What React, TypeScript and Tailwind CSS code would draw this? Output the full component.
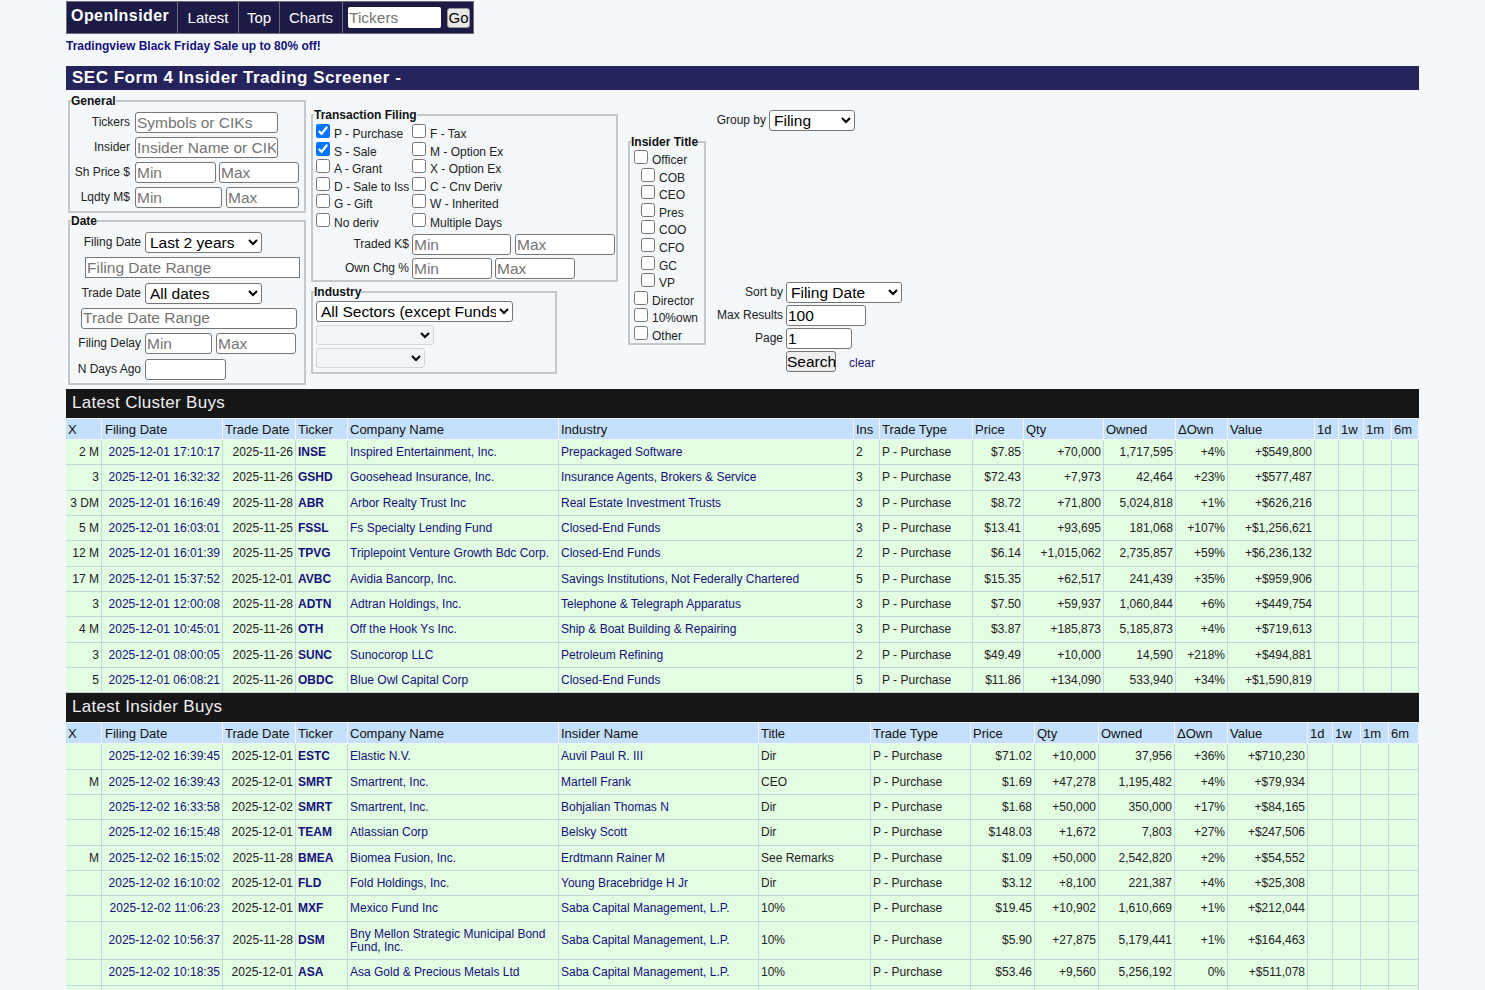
import React from "react";

const field = "h-[21px] border border-[#767676] rounded-[3px] bg-white px-[1px] text-[15.5px] leading-[19px] text-black placeholder:text-[#757575] outline-none";
const sel = "h-[21px] border border-[#767676] rounded-[3px] bg-white text-[15.5px] text-black";
const lab = "text-[12px] leading-[21px] text-right text-[#222] shrink-0";
const leg = "ml-[1px] text-[12px] leading-[14px] font-bold text-[#111]";
const fs = "border-2 border-[#c5c8cb]";
const link = "text-[#14107c]";

function Cb({ label, checked, indent }: { label: string; checked?: boolean; indent?: boolean }) {
  return (
    <div className="flex items-start">
      <input type="checkbox" defaultChecked={checked} className="w-[14px] h-[14px] mt-[2px] m-0 shrink-0" />
      <span className="ml-[4px] mt-[5px] text-[12px] leading-[14px] text-[#222] whitespace-nowrap">{label}</span>
    </div>
  );
}

function TitleCb({ label, indent }: { label: string; indent?: boolean }) {
  return (
    <div className={indent ? "flex items-start h-[17.6px] pl-[11px]" : "flex items-start h-[17.6px] pl-[4px]"}>
      <input type="checkbox" className="w-[14px] h-[14px] mt-[1px] m-0 shrink-0" />
      <span className="ml-[4px] mt-[4px] text-[12px] leading-[14px] text-[#222] whitespace-nowrap">{label}</span>
    </div>
  );
}

const txRows: [string, string, boolean?][] = [
  ["P - Purchase", "F - Tax", true],
  ["S - Sale", "M - Option Ex", true],
  ["A - Grant", "X - Option Ex"],
  ["D - Sale to Iss", "C - Cnv Deriv"],
  ["G - Gift", "W - Inherited"],
];

function Form() {
  return (
    <form className="flex items-start h-[295px] mt-[4px] pl-[2px]">
      <div className="w-[238px] shrink-0">
        <fieldset className={fs + " pb-[3px]"}>
          <legend className={leg}>General</legend>
          <div className="pt-[4px] flex flex-col gap-[4px]">
            <div className="flex gap-[5px]">
              <span className={lab + " w-[60px]"}>Tickers</span>
              <input className={field + " w-[143px]"} placeholder="Symbols or CIKs" />
            </div>
            <div className="flex gap-[5px]">
              <span className={lab + " w-[60px]"}>Insider</span>
              <input className={field + " w-[143px]"} placeholder="Insider Name or CIK" />
            </div>
            <div className="flex gap-[5px]">
              <span className={lab + " w-[60px]"}>Sh Price $</span>
              <input className={field + " w-[81px]"} placeholder="Min" />
              <input className={field + " w-[80px] -ml-[2px]"} placeholder="Max" />
            </div>
            <div className="flex gap-[5px]">
              <span className={lab + " w-[60px]"}>Lqdty M$</span>
              <input className={field + " w-[87px]"} placeholder="Min" />
              <input className={field + " w-[73px] -ml-[1px]"} placeholder="Max" />
            </div>
          </div>
        </fieldset>
        <fieldset className={fs + " pb-[3px] mt-[1px]"}>
          <legend className={leg}>Date</legend>
          <div className="pt-[4px] flex flex-col gap-[4.33px]">
            <div className="flex gap-[4px]">
              <span className={lab + " w-[71px]"}>Filing Date</span>
              <select className={sel + " w-[117px]"} defaultValue="a"><option value="a">Last 2 years</option></select>
            </div>
            <input className={field + " w-[215px] ml-[15px] rounded-none"} placeholder="Filing Date Range" />
            <div className="flex gap-[4px]">
              <span className={lab + " w-[71px]"}>Trade Date</span>
              <select className={sel + " w-[117px]"} defaultValue="a"><option value="a">All dates</option></select>
            </div>
            <input className={field + " w-[216px] ml-[11px]"} placeholder="Trade Date Range" />
            <div className="flex gap-[4px]">
              <span className={lab + " w-[71px]"}>Filing Delay</span>
              <input className={field + " w-[67px]"} placeholder="Min" />
              <input className={field + " w-[80px]"} placeholder="Max" />
            </div>
            <div className="flex gap-[4px]">
              <span className={lab + " w-[71px]"}>N Days Ago</span>
              <input className={field + " w-[81px]"} />
            </div>
          </div>
        </fieldset>
      </div>

      <div className="w-[307px] ml-[5px] mt-[14px] shrink-0">
        <fieldset className={fs + " pb-[1px]"}>
          <legend className={leg}>Transaction Filing</legend>
          <div className="pl-[3px]">
            {txRows.map(([a, b, c]) => (
              <div key={a} className="flex h-[17.6px]">
                <div className="w-[96px] shrink-0"><Cb label={a} checked={c} /></div>
                <Cb label={b} />
              </div>
            ))}
            <div className="flex h-[17.6px] mt-[1.5px]">
              <div className="w-[96px] shrink-0"><Cb label="No deriv" /></div>
              <Cb label="Multiple Days" />
            </div>
          </div>
          <div className="mt-[5px] flex flex-col gap-[3px]">
            <div className="flex gap-[3px]">
              <span className={lab + " w-[96px]"}>Traded K$</span>
              <input className={field + " w-[99px]"} placeholder="Min" />
              <input className={field + " w-[100px] ml-[1px]"} placeholder="Max" />
            </div>
            <div className="flex gap-[3px]">
              <span className={lab + " w-[96px]"}>Own Chg %</span>
              <input className={field + " w-[80px]"} placeholder="Min" />
              <input className={field + " w-[80px]"} placeholder="Max" />
            </div>
          </div>
        </fieldset>
        <fieldset className={fs + " w-[246px] mt-[3px] pb-[4px]"}>
          <legend className={leg}>Industry</legend>
          <div className="pl-[3px] pt-[2px] flex flex-col items-start gap-[3px]">
            <select className={sel + " w-[197px]"} defaultValue="a"><option value="a">All Sectors (except Funds)</option></select>
            <select disabled className="h-[20px] w-[118px] border border-[#d4d6d8] rounded-[3px] bg-[#f2f5f7]" />
            <select disabled className="h-[20px] w-[109px] border border-[#d4d6d8] rounded-[3px] bg-[#f2f5f7]" />
          </div>
        </fieldset>
      </div>

      <fieldset className={fs + " w-[78px] ml-[10px] mt-[41px] shrink-0"}>
        <legend className={leg}>Insider Title</legend>
        <TitleCb label="Officer" />
        <TitleCb indent label="COB" />
        <TitleCb indent label="CEO" />
        <TitleCb indent label="Pres" />
        <TitleCb indent label="COO" />
        <TitleCb indent label="CFO" />
        <TitleCb indent label="GC" />
        <TitleCb indent label="VP" />
        <TitleCb label="Director" />
        <TitleCb label="10%own" />
        <TitleCb label="Other" />
      </fieldset>

      <div className="ml-[10px] mt-[16px] shrink-0">
        <div className="flex gap-[3px]">
          <span className={lab + " w-[50px]"}>Group by</span>
          <select className={sel + " w-[86px]"} defaultValue="a"><option value="a">Filing</option></select>
        </div>
        <div className="mt-[151px] flex flex-col gap-[2px]">
          <div className="flex gap-[3px]">
            <span className={lab + " w-[67px]"}>Sort by</span>
            <select className={sel + " w-[116px]"} defaultValue="a"><option value="a">Filing Date</option></select>
          </div>
          <div className="flex gap-[3px]">
            <span className={lab + " w-[67px]"}>Max Results</span>
            <input className={field + " w-[80px]"} defaultValue="100" />
          </div>
          <div className="flex gap-[3px]">
            <span className={lab + " w-[67px]"}>Page</span>
            <input className={field + " w-[66px]"} defaultValue="1" />
          </div>
          <div className="flex items-center pl-[70px]">
            <button type="button" className="h-[21px] w-[50px] border border-[#767676] rounded-[3px] bg-[#efefef] text-[15.5px] leading-[17px] text-black">Search</button>
            <a className={"ml-[13px] mt-[2px] text-[12px] " + link}>clear</a>
          </div>
        </div>
      </div>
    </form>
  );
}

type Row = string[];

const cw1 = [36, 121, 73, 52, 211, 295, 26, 93, 51, 80, 72, 52, 87, 24, 25, 28, 27];
const cw2 = [36, 121, 73, 52, 211, 200, 112, 100, 64, 64, 76, 53, 80, 25, 28, 28, 30];

const h1 = ["X", "Filing Date", "Trade Date", "Ticker", "Company Name", "Industry", "Ins", "Trade Type", "Price", "Qty", "Owned", "ΔOwn", "Value", "1d", "1w", "1m", "6m"];
const h2 = ["X", "Filing Date", "Trade Date", "Ticker", "Company Name", "Insider Name", "Title", "Trade Type", "Price", "Qty", "Owned", "ΔOwn", "Value", "1d", "1w", "1m", "6m"];

const PP = "P - Purchase";
const r1: Row[] = [
  ["2 M", "2025-12-01 17:10:17", "2025-11-26", "INSE", "Inspired Entertainment, Inc.", "Prepackaged Software", "2", PP, "$7.85", "+70,000", "1,717,595", "+4%", "+$549,800"],
  ["3", "2025-12-01 16:32:32", "2025-11-26", "GSHD", "Goosehead Insurance, Inc.", "Insurance Agents, Brokers & Service", "3", PP, "$72.43", "+7,973", "42,464", "+23%", "+$577,487"],
  ["3 DM", "2025-12-01 16:16:49", "2025-11-28", "ABR", "Arbor Realty Trust Inc", "Real Estate Investment Trusts", "3", PP, "$8.72", "+71,800", "5,024,818", "+1%", "+$626,216"],
  ["5 M", "2025-12-01 16:03:01", "2025-11-25", "FSSL", "Fs Specialty Lending Fund", "Closed-End Funds", "3", PP, "$13.41", "+93,695", "181,068", "+107%", "+$1,256,621"],
  ["12 M", "2025-12-01 16:01:39", "2025-11-25", "TPVG", "Triplepoint Venture Growth Bdc Corp.", "Closed-End Funds", "2", PP, "$6.14", "+1,015,062", "2,735,857", "+59%", "+$6,236,132"],
  ["17 M", "2025-12-01 15:37:52", "2025-12-01", "AVBC", "Avidia Bancorp, Inc.", "Savings Institutions, Not Federally Chartered", "5", PP, "$15.35", "+62,517", "241,439", "+35%", "+$959,906"],
  ["3", "2025-12-01 12:00:08", "2025-11-28", "ADTN", "Adtran Holdings, Inc.", "Telephone & Telegraph Apparatus", "3", PP, "$7.50", "+59,937", "1,060,844", "+6%", "+$449,754"],
  ["4 M", "2025-12-01 10:45:01", "2025-11-26", "OTH", "Off the Hook Ys Inc.", "Ship & Boat Building & Repairing", "3", PP, "$3.87", "+185,873", "5,185,873", "+4%", "+$719,613"],
  ["3", "2025-12-01 08:00:05", "2025-11-26", "SUNC", "Sunocorop LLC", "Petroleum Refining", "2", PP, "$49.49", "+10,000", "14,590", "+218%", "+$494,881"],
  ["5", "2025-12-01 06:08:21", "2025-11-26", "OBDC", "Blue Owl Capital Corp", "Closed-End Funds", "5", PP, "$11.86", "+134,090", "533,940", "+34%", "+$1,590,819"],
];
const saba = "Saba Capital Management, L.P.";
const r2: Row[] = [
  ["", "2025-12-02 16:39:45", "2025-12-01", "ESTC", "Elastic N.V.", "Auvil Paul R. III", "Dir", PP, "$71.02", "+10,000", "37,956", "+36%", "+$710,230"],
  ["M", "2025-12-02 16:39:43", "2025-12-01", "SMRT", "Smartrent, Inc.", "Martell Frank", "CEO", PP, "$1.69", "+47,278", "1,195,482", "+4%", "+$79,934"],
  ["", "2025-12-02 16:33:58", "2025-12-02", "SMRT", "Smartrent, Inc.", "Bohjalian Thomas N", "Dir", PP, "$1.68", "+50,000", "350,000", "+17%", "+$84,165"],
  ["", "2025-12-02 16:15:48", "2025-12-01", "TEAM", "Atlassian Corp", "Belsky Scott", "Dir", PP, "$148.03", "+1,672", "7,803", "+27%", "+$247,506"],
  ["M", "2025-12-02 16:15:02", "2025-11-28", "BMEA", "Biomea Fusion, Inc.", "Erdtmann Rainer M", "See Remarks", PP, "$1.09", "+50,000", "2,542,820", "+2%", "+$54,552"],
  ["", "2025-12-02 16:10:02", "2025-12-01", "FLD", "Fold Holdings, Inc.", "Young Bracebridge H Jr", "Dir", PP, "$3.12", "+8,100", "221,387", "+4%", "+$25,308"],
  ["", "2025-12-02 11:06:23", "2025-12-01", "MXF", "Mexico Fund Inc", saba, "10%", PP, "$19.45", "+10,902", "1,610,669", "+1%", "+$212,044"],
  ["", "2025-12-02 10:56:37", "2025-11-28", "DSM", "Bny Mellon Strategic Municipal Bond Fund, Inc.", saba, "10%", PP, "$5.90", "+27,875", "5,179,441", "+1%", "+$164,463"],
  ["", "2025-12-02 10:18:35", "2025-12-01", "ASA", "Asa Gold & Precious Metals Ltd", saba, "10%", PP, "$53.46", "+9,560", "5,256,192", "0%", "+$511,078"],
  ["", "2025-12-02 10:10:11", "2025-12-01", "ASA", "Asa Gold & Precious Metals Ltd", saba, "10%", PP, "$52.90", "+1,200", "5,246,632", "0%", "+$63,480"],
];

const td = "border-r border-b border-[#c5d6da] pt-[6px] pb-[5px] text-[12px] leading-[13.33px] align-middle";

function Table({ widths, head, rows, industry }: { widths: number[]; head: string[]; rows: Row[]; industry: boolean }) {
  const rightFrom = industry ? 8 : 8;
  return (
    <table className="w-[1353px] table-fixed border-separate border-spacing-0">
      <colgroup>
        {widths.map((w, i) => (
          <col key={i} style={{ width: w }} />
        ))}
      </colgroup>
      <thead>
        <tr>
          {head.map((h, i) => (
            <th key={i} className={(i === 1 ? "pl-[3px] " : "pl-[2px] ") + "h-[22px] pt-[1px] border-r border-b border-t border-[#f0f6fb] bg-[#c4e0fc] text-left font-normal text-[13px] leading-[18px] text-[#111]"}>
              {h}
            </th>
          ))}
        </tr>
      </thead>
      <tbody>
        {rows.map((r, ri) => (
          <tr key={ri} className="bg-[#e3fde3]">
            {head.map((_, i) => {
              const v = r[i] ?? "";
              const right = i <= 2 || (i >= rightFrom && i <= 12);
              const align = right ? " text-right pr-[2px]" : " text-left pl-[2px] pr-[2px]";
              let color = " text-[#222]";
              if (i === 1 || i === 4 || i === 5) color = " text-[#14107c]";
              if (i === 5 && !industry) color = " text-[#14107c]";
              if (i === 3) color = " text-[#14107c] font-bold";
              return (
                <td key={i} className={td + align + color}>
                  {v}
                </td>
              );
            })}
          </tr>
        ))}
      </tbody>
    </table>
  );
}

export default function App() {
  return (
    <div className="h-[990px] overflow-hidden bg-[#f4f8fb] font-['Liberation_Sans',Arial,sans-serif]">
      <div className="w-[1353px] mx-auto pt-[1px]">
        <nav className="flex w-[408px] h-[33px] bg-[#1c1b45] border border-[#6d6e7c] text-white">
          <a className="w-[111px] pl-[4px] text-[16px] font-bold leading-[28px] tracking-[0.45px] border-r border-[#6d6e7c]">OpenInsider</a>
          <a className="w-[61px] text-center text-[15px] leading-[31px] border-r border-[#6d6e7c]">Latest</a>
          <a className="w-[41px] text-center text-[15px] leading-[31px] border-r border-[#6d6e7c]">Top</a>
          <a className="w-[63px] text-center text-[15px] leading-[31px] border-r border-[#6d6e7c]">Charts</a>
          <div className="flex items-center pl-[5px] gap-[6px]">
            <input className="w-[93px] h-[21px] rounded-[2px] bg-white px-[1px] text-[15.5px] text-black placeholder:text-[#757575] outline-none" placeholder="Tickers" />
            <button type="button" className="w-[23px] h-[20px] rounded-[3px] bg-[#e8e8e8] border border-[#9a9a9a] text-[15px] leading-[16px] text-black">Go</button>
          </div>
        </nav>
        <div className="mt-[5px] h-[27px] text-[12px] leading-[14px] font-bold text-[#14107c]">Tradingview Black Friday Sale up to 80% off!</div>
        <h1 className="h-[24px] bg-[#25235b] pl-[6px] text-[17px] leading-[23px] font-bold tracking-[0.5px] text-white">SEC Form 4 Insider Trading Screener -</h1>
        <Form />
        <h2 className="h-[29px] bg-[#161616] pl-[6px] text-[17px] leading-[27px] font-normal tracking-[0.3px] text-[#f0f0f0]">Latest Cluster Buys</h2>
        <Table widths={cw1} head={h1} rows={r1} industry />
        <h2 className="h-[29px] bg-[#161616] pl-[6px] text-[17px] leading-[27px] font-normal tracking-[0.3px] text-[#f0f0f0]">Latest Insider Buys</h2>
        <Table widths={cw2} head={h2} rows={r2} industry={false} />
      </div>
    </div>
  );
}
